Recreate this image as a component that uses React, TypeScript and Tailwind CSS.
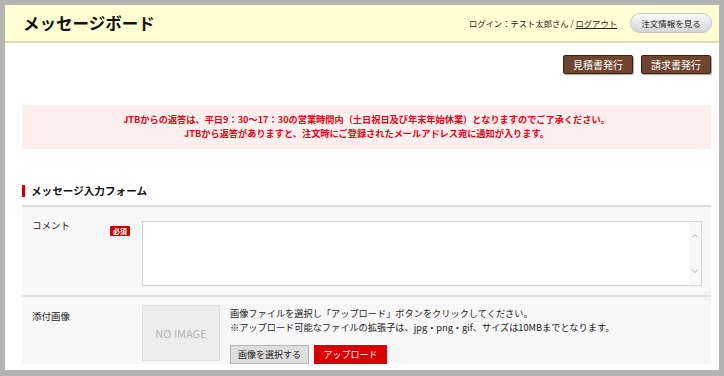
const jp = { fontFamily: '"Noto Sans CJK JP", "Noto Sans", sans-serif' };

const BrownButton = ({ label }: { label: string }) => (
  <button className="h-[19px] w-[70px] rounded-[2px] border border-[#3e2315] bg-[#6e4630] text-[10px] leading-none text-white shadow-[1px_1px_1px_rgba(0,0,0,0.35)]">
    {label}
  </button>
);

const Chevron = ({ up }: { up?: boolean }) => (
  <svg width="8" height="5" viewBox="0 0 8 5" fill="none">
    <path
      d={up ? "M1 4.5 L4 1.5 L7 4.5" : "M1 0.5 L4 3.5 L7 0.5"}
      stroke="#a8a8a8"
      strokeWidth="1"
    />
  </svg>
);

export default function App() {
  return (
    <div
      className="h-[376px] w-[724px] overflow-hidden bg-[#b3b3b3] pl-[5px] pr-[5px] pt-[5px]"
      style={jp}
    >
      <div className="h-[365px] w-[714px] bg-white">
        {/* header */}
        <div className="flex h-[38px] items-center justify-between border-b-2 border-[#deddb8] bg-[#ffffd3] pl-[18px] pr-[7px]">
          <h1 className="text-[16.5px] font-bold leading-none text-[#111]">メッセージボード</h1>
          <div className="flex items-center">
            <p className="text-[8.3px] text-[#222]">
              ログイン：テスト太郎さん / <span className="underline">ログアウト</span>
            </p>
            <button className="ml-[13px] h-[20px] w-[82px] rounded-full border border-[#c4c4c4] bg-gradient-to-b from-[#fafafa] to-[#d6d6d6] text-[8.5px] text-[#222]">
              注文情報を見る
            </button>
          </div>
        </div>

        <div className="pl-[17px] pr-[8px]">
          {/* issue buttons */}
          <div className="mt-[12px] flex justify-end gap-[8px]">
            <BrownButton label="見積書発行" />
            <BrownButton label="請求書発行" />
          </div>

          {/* notice */}
          <div className="mt-[31px] flex h-[44px] flex-col items-center justify-center gap-[3px] bg-[#fff0f0] pb-[2px] text-[9.2px] font-bold leading-[11px] text-[#e60012]">
            <p>JTBからの返答は、平日9：30～17：30の営業時間内（土日祝日及び年末年始休業）となりますのでご了承ください。</p>
            <p>JTBから返答がありますと、注文時にご登録されたメールアドレス宛に通知が入ります。</p>
          </div>

          {/* section heading */}
          <div className="mt-[36px] flex items-center">
            <span className="h-[12px] w-[3px] bg-[#cc0000]" />
            <h2 className="ml-[6px] text-[10.6px] font-bold leading-none text-[#111]">メッセージ入力フォーム</h2>
          </div>

          {/* form */}
          <div className="mt-[8px] border-t-2 border-[#dcdcdc] bg-[#f7f7f7]">
            <div className="flex border-b-2 border-[#e2e2e2] pb-[9px] pr-[9px] pt-[14px]">
              <div className="flex w-[120px] items-start justify-between pl-[10px] pr-[12px] text-[9.5px] leading-[14px] text-[#222]">
                <span className="-mt-[3px]">コメント</span>
                <span className="mt-[5px] flex h-[10px] w-[20px] items-center justify-center rounded-[1px] bg-[#cc0000] text-[7px] font-bold leading-none text-white">
                  必須
                </span>
              </div>
              <div className="flex h-[65px] flex-1 border border-[#d6d6d6] bg-white">
                <div className="flex-1" />
                <div className="flex w-[12px] flex-col items-center justify-between bg-[#f8f8f8] py-[11px]">
                  <Chevron up />
                  <Chevron />
                </div>
              </div>
            </div>

            <div className="flex pt-[8px]">
              <div className="w-[120px] pl-[10px] pt-[4px] text-[9.5px] leading-[14px] text-[#222]">添付画像</div>
              <div className="flex h-[56px] w-[78px] items-center justify-center border border-[#e0e0e0] bg-[#ededed] text-[11px] font-normal text-[#b4b4b4]">
                NO IMAGE
              </div>
              <div className="ml-[10px] flex flex-col pt-[1px] text-[9.2px] leading-[14px] text-[#222]">
                <p>画像ファイルを選択し「アップロード」ボタンをクリックしてください。</p>
                <p>※アップロード可能なファイルの拡張子は、jpg・png・gif、サイズは10MBまでとなります。</p>
                <div className="mt-[11px] flex gap-[5px]">
                  <button className="h-[19px] w-[79px] border border-[#b5b5b5] bg-[#dedede] text-[9px] text-[#222]">
                    画像を選択する
                  </button>
                  <button className="h-[19px] w-[73px] bg-[#d70000] text-[9px] text-white">アップロード</button>
                </div>
              </div>
            </div>
          </div>
        </div>
      </div>
    </div>
  );
}
